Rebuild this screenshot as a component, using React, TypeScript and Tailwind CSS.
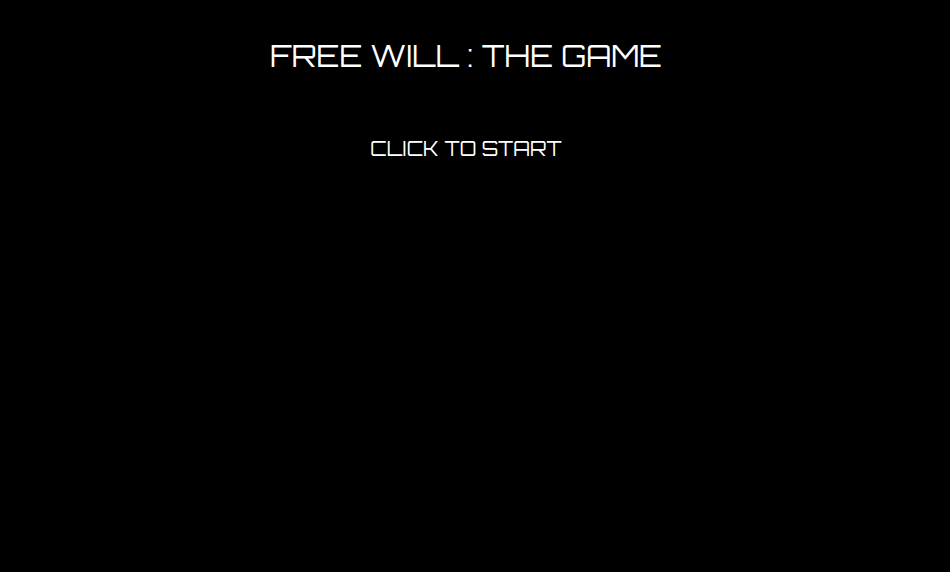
export default function App() {
  return (
    <main className="flex min-h-screen flex-col items-center bg-black pt-9 pr-[18px] font-['Orbitron','Inter',sans-serif] text-white">
      <h1 className="text-3xl leading-10 font-normal">FREE WILL : THE GAME</h1>
      <button type="button" className="mt-[57px] cursor-pointer text-xl leading-8">
        CLICK TO START
      </button>
    </main>
  );
}
